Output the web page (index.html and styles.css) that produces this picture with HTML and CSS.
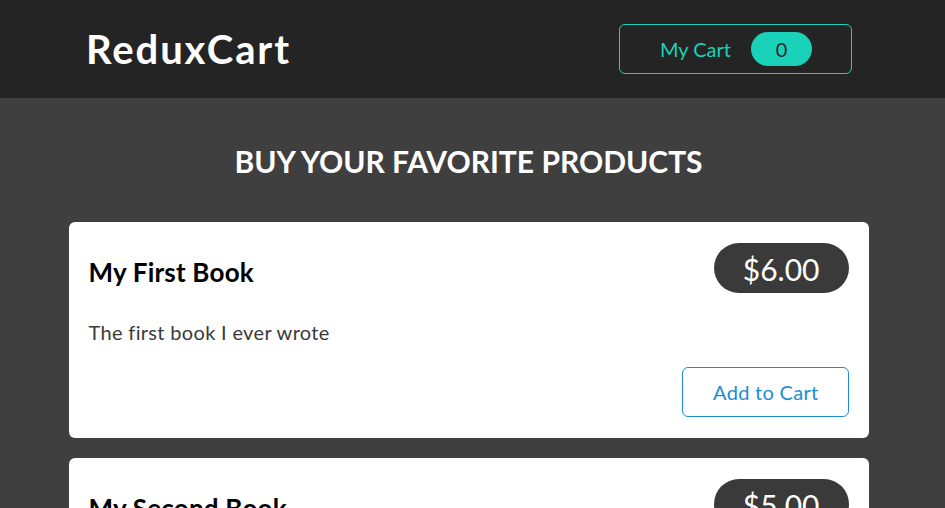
FILE: index.html
```html
<!DOCTYPE html>
<html lang="en">
<head>
<meta charset="utf-8">
<title>ReduxCart</title>
<link rel="stylesheet" href="styles.css">
</head>
<body>
<header class="header">
  <div class="header-inner">
    <h1 class="logo">ReduxCart</h1>
    <button class="cart-button">
      <span>My Cart</span>
      <span class="badge">0</span>
    </button>
  </div>
</header>
<main class="main">
  <h2 class="heading">BUY YOUR FAVORITE PRODUCTS</h2>
  <ul class="products">
    <li class="card">
      <div class="card-head">
        <h3 class="card-title">My First Book</h3>
        <div class="price">$6.00</div>
      </div>
      <p class="desc">The first book I ever wrote</p>
      <div class="actions">
        <button class="add-btn">Add to Cart</button>
      </div>
    </li>
    <li class="card">
      <div class="card-head">
        <h3 class="card-title">My Second Book</h3>
        <div class="price">$5.00</div>
      </div>
      <p class="desc">The second book I ever wrote</p>
      <div class="actions">
        <button class="add-btn">Add to Cart</button>
      </div>
    </li>
  </ul>
</main>
</body>
</html>
```
FILE: styles.css
```css
* { box-sizing: border-box; }
html, body {
  margin: 0;
  padding: 0;
  height: 100%;
  overflow: hidden;
}
body {
  font-family: Lato, "Liberation Sans", sans-serif;
  background: #3f3f3f;
}
.header {
  height: 98px;
  background: #252424;
}
.header-inner {
  width: 937px;
  height: 100%;
  padding: 0 85px 0 86px;
  display: flex;
  align-items: center;
  justify-content: space-between;
}
.logo {
  margin: 0;
  color: #ffffff;
  font-size: 40px;
  font-weight: 700;
  letter-spacing: 1.9px;
}
.cart-button {
  height: 50px;
  margin-top: -1px;
  padding: 0 39px 0 40px;
  display: flex;
  align-items: center;
  gap: 20px;
  background: transparent;
  border: 1px solid #1ad1b9;
  border-radius: 6px;
  color: #1ad1b9;
  font-family: inherit;
  font-size: 20px;
}
.badge {
  width: 61px;
  height: 34px;
  border-radius: 17px;
  background: #1ad1b9;
  color: #2a2a2a;
  display: flex;
  align-items: center;
  justify-content: center;
  font-size: 20px;
}
.main {
  width: 937px;
  padding-top: 44px;
}
.heading {
  margin: 0 0 42px;
  text-align: center;
  color: #ffffff;
  font-size: 30px;
  line-height: 38px;
  font-weight: 700;
}
.products {
  list-style: none;
  margin: 0 auto;
  padding: 0;
  width: 800px;
  display: flex;
  flex-direction: column;
  gap: 20px;
}
.card {
  background: #ffffff;
  border-radius: 6px;
  padding: 21px 20px 21px 20px;
}
.card-head {
  display: flex;
  align-items: center;
  justify-content: space-between;
}
.card-title {
  margin: 0;
  padding-top: 8px;
  font-size: 26px;
  font-weight: 700;
  letter-spacing: 0.2px;
  color: #000;
}
.price {
  height: 50px;
  padding: 2px 29px 0 29px;
  border-radius: 25px;
  background: #3a3a3a;
  color: #ffffff;
  font-size: 30px;
  display: flex;
  align-items: center;
}
.desc {
  margin: 27px 0 23px;
  font-size: 20px;
  line-height: 24px;
  letter-spacing: 0.33px;
  color: #3a3a3a;
}
.actions {
  display: flex;
  justify-content: flex-end;
}
.add-btn {
  height: 50px;
  padding: 0 29px 0 30px;
  background: #fff;
  border: 1px solid #1a8ed1;
  border-radius: 6px;
  color: #1a8ed1;
  font-family: inherit;
  font-size: 20px;
  letter-spacing: 0.3px;
}
```
